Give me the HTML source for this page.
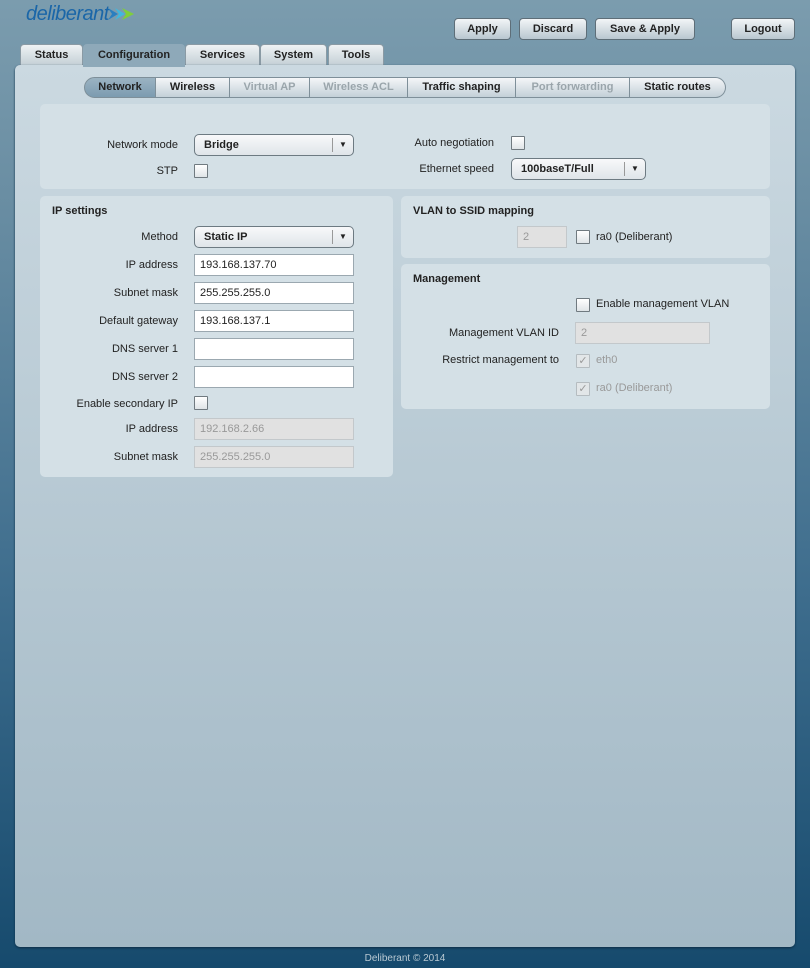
<!DOCTYPE html>
<html><head><meta charset="utf-8"><style>
*{box-sizing:border-box;margin:0;padding:0}
body{width:810px;height:968px;position:relative;overflow:hidden;font-family:"Liberation Sans","DejaVu Sans",sans-serif;font-size:11px;color:#222;background:linear-gradient(#7b9cae 0%,#6a8ea3 20%,#3f6e8e 60%,#164a6d 100%)}
.a{position:absolute}
.btn{position:absolute;top:18px;height:22px;border:1px solid #5e6e78;border-radius:4px;background:linear-gradient(#f2f5f7,#b9c7d0);font-weight:bold;font-size:11px;text-align:center;line-height:20px;color:#222}
.tab{position:absolute;top:44px;height:21px;border:1px solid #8a9aa4;border-bottom:none;border-radius:4px 4px 0 0;background:linear-gradient(#eef2f4,#c5d0d6);font-weight:bold;text-align:center;line-height:20px}
.main{left:15px;top:65px;width:780px;height:882px;border-radius:5px;background:linear-gradient(#cbd9e1,#a2b8c5);box-shadow:0 1px 2px #0c2c44}
.sub{position:absolute;top:77px;height:21px;border:1px solid #7e8f99;border-left:none;background:linear-gradient(#f4f6f8,#c3d0d8);font-weight:bold;text-align:center;line-height:19px}
.sub.dis{color:#9aa5ab}
.box{position:absolute;border-radius:5px;background:#d4e0e6}
.lbl{position:absolute;text-align:right;width:140px}
.h{position:absolute;font-weight:bold}
.in{position:absolute;height:22px;border:1px solid #9ba8b0;background:#fff;padding-left:5px;line-height:20px}
.in.d{background:#e1e1e1;color:#999;border-color:#c3c8cb}
.sel{position:absolute;height:22px;border:1px solid #6d7a82;border-radius:5px;background:linear-gradient(#f8f9fa,#dfe5e9);font-weight:bold;padding-left:9px;line-height:20px}
.sel:after{content:"▼";position:absolute;right:0;top:3px;width:20px;height:14px;border-left:1px solid #999;font-size:8px;text-align:center;line-height:14px}
.cb{position:absolute;width:14px;height:14px;border:1px solid #707a80;background:linear-gradient(#fff,#dfe4e7);border-radius:1px}
.cb.d{border-color:#b5bcc0;background:#e2e6e8;color:#999;font-size:11px;line-height:12px;text-align:center}
</style></head><body>
<div class="a" style="left:26px;top:3px;font-size:20px;font-style:italic;color:#1a66a8;letter-spacing:-0.5px">deliberant</div>
<svg class="a" style="left:108px;top:8px" width="28" height="12" viewBox="0 0 28 12"><path d="M0 0 L10 6 L0 12 L4 6Z" fill="#2a7fc0"/><path d="M7 0 L17 6 L7 12 L11 6Z" fill="#3fb8e0"/><path d="M14 0 L26 6 L14 12 L18 6Z" fill="#7fcf3a"/></svg>
<div class="btn" style="left:454px;width:57px">Apply</div>
<div class="btn" style="left:519px;width:68px">Discard</div>
<div class="btn" style="left:595px;width:100px">Save &amp; Apply</div>
<div class="btn" style="left:731px;width:64px">Logout</div>
<div class="tab" style="left:20px;width:63px">Status</div>
<div class="tab" style="left:185px;width:75px">Services</div>
<div class="tab" style="left:260px;width:67px">System</div>
<div class="tab" style="left:328px;width:56px">Tools</div>
<div class="a main"></div>
<div class="tab" style="left:83px;width:102px;height:23px;background:#8ea9b9;border-color:#8ea9b9;font-weight:bold">Configuration</div>
<div class="sub" style="left:84px;width:72px;border-left:1px solid #7e8f99;border-radius:11px 0 0 11px;background:linear-gradient(#9bb3c2,#7c9bb0)">Network</div>
<div class="sub" style="left:156px;width:74px">Wireless</div>
<div class="sub dis" style="left:230px;width:80px">Virtual AP</div>
<div class="sub dis" style="left:310px;width:98px">Wireless ACL</div>
<div class="sub" style="left:408px;width:108px">Traffic shaping</div>
<div class="sub dis" style="left:516px;width:114px">Port forwarding</div>
<div class="sub" style="left:630px;width:96px;border-radius:0 11px 11px 0">Static routes</div>

<div class="box" style="left:40px;top:104px;width:730px;height:85px"></div>
<div class="lbl" style="left:38px;top:139px">Network mode</div>
<div class="sel" style="left:194px;top:134px;width:160px">Bridge</div>
<div class="lbl" style="left:38px;top:165px">STP</div>
<div class="cb" style="left:194px;top:164px"></div>
<div class="lbl" style="left:354px;top:137px">Auto negotiation</div>
<div class="cb" style="left:511px;top:136px"></div>
<div class="lbl" style="left:354px;top:163px">Ethernet speed</div>
<div class="sel" style="left:511px;top:158px;width:135px">100baseT/Full</div>

<div class="box" style="left:40px;top:196px;width:353px;height:281px"></div>
<div class="h" style="left:52px;top:205px">IP settings</div>
<div class="lbl" style="left:38px;top:231px">Method</div>
<div class="sel" style="left:194px;top:226px;width:160px">Static IP</div>
<div class="lbl" style="left:38px;top:259px">IP address</div>
<div class="in" style="left:194px;top:254px;width:160px">193.168.137.70</div>
<div class="lbl" style="left:38px;top:287px">Subnet mask</div>
<div class="in" style="left:194px;top:282px;width:160px">255.255.255.0</div>
<div class="lbl" style="left:38px;top:315px">Default gateway</div>
<div class="in" style="left:194px;top:310px;width:160px">193.168.137.1</div>
<div class="lbl" style="left:38px;top:343px">DNS server 1</div>
<div class="in" style="left:194px;top:338px;width:160px"></div>
<div class="lbl" style="left:38px;top:371px">DNS server 2</div>
<div class="in" style="left:194px;top:366px;width:160px"></div>
<div class="lbl" style="left:38px;top:398px">Enable secondary IP</div>
<div class="cb" style="left:194px;top:396px"></div>
<div class="lbl" style="left:38px;top:423px">IP address</div>
<div class="in d" style="left:194px;top:418px;width:160px">192.168.2.66</div>
<div class="lbl" style="left:38px;top:451px">Subnet mask</div>
<div class="in d" style="left:194px;top:446px;width:160px">255.255.255.0</div>

<div class="box" style="left:401px;top:196px;width:369px;height:62px"></div>
<div class="h" style="left:413px;top:205px">VLAN to SSID mapping</div>
<div class="in d" style="left:517px;top:226px;width:50px">2</div>
<div class="cb" style="left:576px;top:230px"></div>
<div class="a" style="left:596px;top:231px">ra0 (Deliberant)</div>

<div class="box" style="left:401px;top:264px;width:369px;height:145px"></div>
<div class="h" style="left:413px;top:273px">Management</div>
<div class="cb" style="left:576px;top:298px"></div>
<div class="a" style="left:596px;top:298px">Enable management VLAN</div>
<div class="lbl" style="left:419px;top:327px">Management VLAN ID</div>
<div class="in d" style="left:575px;top:322px;width:135px">2</div>
<div class="lbl" style="left:419px;top:354px">Restrict management to</div>
<div class="cb d" style="left:576px;top:354px">✓</div>
<div class="a" style="left:596px;top:354px;color:#999">eth0</div>
<div class="cb d" style="left:576px;top:382px">✓</div>
<div class="a" style="left:596px;top:382px;color:#999">ra0 (Deliberant)</div>

<div class="a" style="left:0;width:810px;top:953px;text-align:center;font-size:10px;color:#b9c9d3">Deliberant © 2014</div>
</body></html>
